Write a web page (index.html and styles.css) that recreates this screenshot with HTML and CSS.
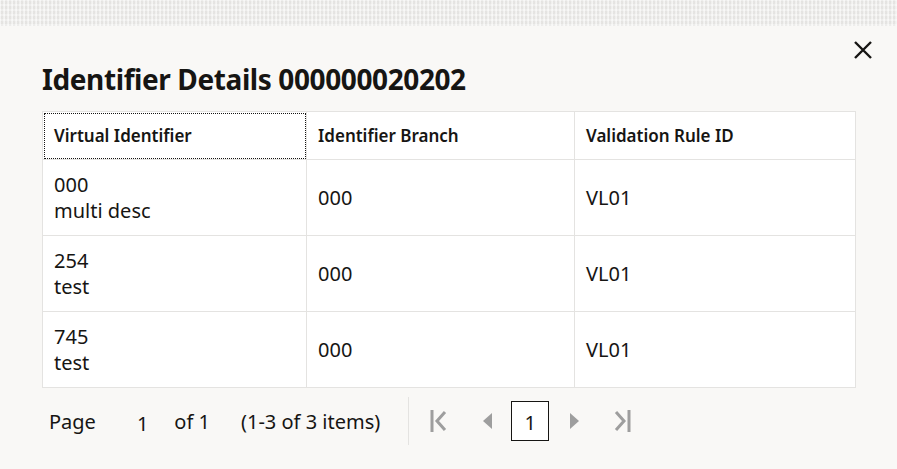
FILE: index.html
```html
<!DOCTYPE html>
<html lang="en">
<head>
    <meta charset="UTF-8">
    <title>Identifier Details</title>
    <link rel="stylesheet" href="styles.css">
</head>
<body>
    <div class="backdrop"></div>

    <div class="dialog">
        <div class="dialog-header">
            <span class="close-btn">
                <svg width="20" height="20" viewBox="0 0 20 20"><path d="M2 2 L18 18 M18 2 L2 18" stroke="#161513" stroke-width="2.4" fill="none"/></svg>
            </span>
        </div>
        <h1 class="dialog-title">Identifier Details 000000020202</h1>

        <table class="grid">
            <thead>
                <tr>
                    <th class="col-1"><span class="focus-box">Virtual Identifier</span></th>
                    <th class="col-2">Identifier Branch</th>
                    <th class="col-3">Validation Rule ID</th>
                </tr>
            </thead>
            <tbody>
                <tr>
                    <td>000<br>multi desc</td>
                    <td>000</td>
                    <td>VL01</td>
                </tr>
                <tr>
                    <td>254<br>test</td>
                    <td>000</td>
                    <td>VL01</td>
                </tr>
                <tr>
                    <td>745<br>test</td>
                    <td>000</td>
                    <td>VL01</td>
                </tr>
            </tbody>
        </table>

        <!-- paging bar -->
        <div class="pager">
            <div class="pager-info">
                <span class="pager-label">Page</span>
                <span class="pager-input">1</span>
                <span class="pager-of">of 1</span>
                <span class="pager-count">(1-3 of 3 items)</span>
            </div>
            <div class="pager-nav">
                <span class="nav-btn">
                    <svg width="18" height="22" viewBox="0 0 18 22"><path d="M2 0 V22" stroke="#9e9e9e" stroke-width="3"/><path d="M15 2 L7 11 L15 20" stroke="#9e9e9e" stroke-width="3" fill="none"/></svg>
                </span>
                <span class="nav-btn small">
                    <svg width="9" height="16" viewBox="0 0 9 16"><path d="M9 0 L0 8 L9 16 Z" fill="#9e9e9e"/></svg>
                </span>
                <span class="page-box">1</span>
                <span class="nav-btn small next">
                    <svg width="9" height="16" viewBox="0 0 9 16"><path d="M0 0 L9 8 L0 16 Z" fill="#9e9e9e"/></svg>
                </span>
                <span class="nav-btn last">
                    <svg width="18" height="22" viewBox="0 0 18 22"><path d="M3 2 L11 11 L3 20" stroke="#9e9e9e" stroke-width="3" fill="none"/><path d="M16 0 V22" stroke="#9e9e9e" stroke-width="3"/></svg>
                </span>
            </div>
        </div>
    </div>
</body>
</html>
```

FILE: styles.css
```css
body {
    margin: 0;
    font-family: "Noto Sans", Arial, sans-serif;
    color: #161513;
    background-color: #f9f8f6;
}
.backdrop {
    height: 26px;
    background-color: #eeedeb;
    background-image:
        repeating-linear-gradient(90deg, rgba(255,255,255,0.5) 0 1px, rgba(0,0,0,0.02) 1px 3px, rgba(255,255,255,0.3) 3px 4px),
        repeating-linear-gradient(0deg, rgba(255,255,255,0.25) 0 2px, rgba(0,0,0,0.02) 2px 5px);
}
.dialog {
    background-color: #f9f8f6;
    padding: 0 41px 0 42px;
    height: 443px;
}
.dialog-header {
    display: flex;
    justify-content: flex-end;
    padding-top: 14px;
    margin-right: -17px;
    height: 21px;
}
.close-btn {
    display: block;
    width: 20px;
    height: 20px;
}
.dialog-title {
    margin: 0;
    font-size: 28px;
    font-weight: 700;
    line-height: 36px;
    letter-spacing: -0.4px;
    height: 50px;
}
.grid {
    width: 814px;
    border-collapse: collapse;
    background-color: #fff;
    border: 1px solid #e4e3e1;
    table-layout: fixed;
}
.grid th, .grid td {
    border: 1px solid #e4e3e1;
    text-align: left;
    padding: 0 11px;
}
.grid th {
    height: 47px;
    font-size: 17px;
    font-weight: 600;
}
.grid td {
    height: 75px;
    font-size: 20px;
    line-height: 26px;
}
.col-1 { width: 241px; }
.col-2 { width: 245px; }
.col-1 { position: relative; }
.focus-box::before {
    content: "";
    position: absolute;
    left: 1px;
    top: 1px;
    right: 0;
    bottom: 0;
    border: 1px dotted #161513;
}
.pager {
    display: flex;
    align-items: center;
    height: 66px;
    font-size: 20px;
}
.pager-info {
    display: flex;
    align-items: center;
    padding-left: 7px;
    padding-right: 28px;
    border-right: 1px solid #e4e3e1;
    height: 48px;
}
.pager-label { margin-right: 41px; }
.pager-input { margin-right: 26px; position: relative; top: 2px; }
.pager-of { margin-right: 31px; }
.pager-nav {
    display: flex;
    align-items: center;
    padding-left: 21px;
}
.nav-btn {
    display: flex;
    align-items: center;
    justify-content: center;
    width: 18px;
    margin-right: 35px;
}
.nav-btn.small {
    width: 9px;
    margin-right: 19px;
}
.nav-btn.next { margin-right: 34px; }
.nav-btn.last { margin-right: 0; }
.page-box {
    width: 38px;
    height: 40px;
    border: 1px solid #161513;
    display: flex;
    align-items: center;
    justify-content: center;
    margin-right: 21px;
    background-color: #fff;
    padding-top: 2px;
    box-sizing: border-box;
}
```
